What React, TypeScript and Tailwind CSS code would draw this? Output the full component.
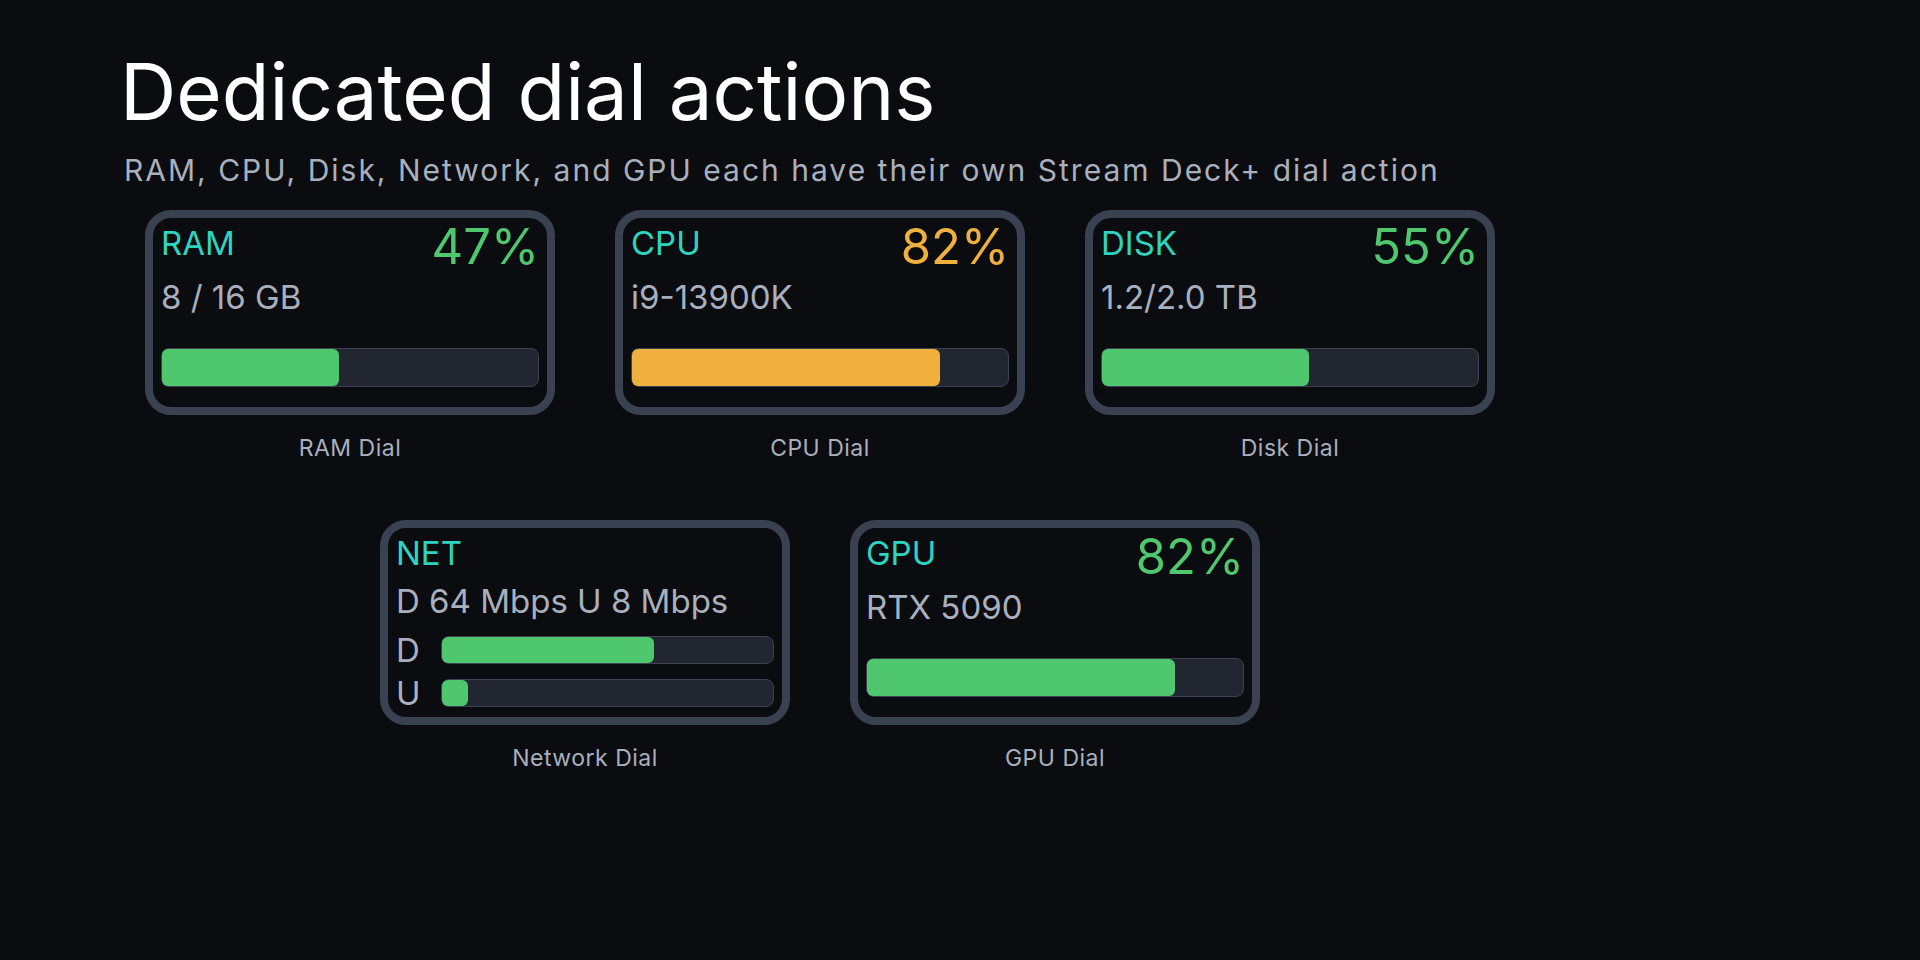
import React from 'react';

type Tone = 'green' | 'amber';

type StatDial = {
  kind: 'stat';
  tag: string;
  detail: string;
  pct: number;
  tone: Tone;
  caption: string;
};

type NetDial = {
  kind: 'net';
  tag: string;
  detail: string;
  down: number;
  up: number;
  caption: string;
};

type Dial = StatDial | NetDial;

const toneText: Record<Tone, string> = {
  green: 'text-[#4fc76f]',
  amber: 'text-[#f0b03e]',
};

const toneFill: Record<Tone, string> = {
  green: 'bg-[#4fc76f]',
  amber: 'bg-[#f0b03e]',
};

const topRow: Dial[] = [
  { kind: 'stat', tag: 'RAM', detail: '8 / 16 GB', pct: 47, tone: 'green', caption: 'RAM Dial' },
  { kind: 'stat', tag: 'CPU', detail: 'i9-13900K', pct: 82, tone: 'amber', caption: 'CPU Dial' },
  { kind: 'stat', tag: 'DISK', detail: '1.2/2.0 TB', pct: 55, tone: 'green', caption: 'Disk Dial' },
];

const bottomRow: Dial[] = [
  { kind: 'net', tag: 'NET', detail: 'D 64 Mbps U 8 Mbps', down: 64, up: 8, caption: 'Network Dial' },
  { kind: 'stat', tag: 'GPU', detail: 'RTX 5090', pct: 82, tone: 'green', caption: 'GPU Dial' },
];

const Bar: React.FC<{ pct: number; fill: string; height: string }> = ({ pct, fill, height }) => (
  <div className={`${height} w-full rounded-[8px] border-[1.5px] border-[#3b4251] bg-[#222631]`}>
    <div className={`h-full rounded-[6px] ${fill}`} style={{ width: `${pct}%` }} />
  </div>
);

const StatFace: React.FC<{ dial: StatDial }> = ({ dial }) => (
  <>
    <div className="flex items-start justify-between pt-[3.5px]">
      <span className="mt-[5px] text-[33px] leading-none text-[#2dd4bf]">{dial.tag}</span>
      <span className={`text-[49px] leading-none ${toneText[dial.tone]}`}>{dial.pct}%</span>
    </div>
    <div className="mt-[10.5px] text-[33px] leading-none text-[#a9b0bd]">{dial.detail}</div>
    <div className="mt-auto mb-[20px]">
      <Bar pct={dial.pct} fill={toneFill[dial.tone]} height="h-[39px]" />
    </div>
  </>
);

const NetFace: React.FC<{ dial: NetDial }> = ({ dial }) => (
  <>
    <div className="pt-[8.5px] text-[33px] leading-none text-[#2dd4bf]">{dial.tag}</div>
    <div className="mt-[15px] text-[33px] leading-none whitespace-nowrap text-[#a9b0bd]">{dial.detail}</div>
    <div className="mt-[16px] flex flex-col gap-[10px]">
      {[
        { label: 'D', pct: dial.down },
        { label: 'U', pct: dial.up },
      ].map(row => (
        <div key={row.label} className="flex items-center">
          <span className="w-[45px] shrink-0 text-[33px] leading-none text-[#a9b0bd]">{row.label}</span>
          <Bar pct={row.pct} fill="bg-[#4fc76f]" height="h-[28px]" />
        </div>
      ))}
    </div>
  </>
);

const DialCard: React.FC<{ dial: Dial }> = ({ dial }) => (
  <div className="flex w-[410px] flex-col items-center">
    <div className="flex h-[205px] w-[410px] flex-col rounded-[26px] border-8 border-[#3a4150] bg-[#0b0c10] px-2">
      {dial.kind === 'stat' ? <StatFace dial={dial} /> : <NetFace dial={dial} />}
    </div>
    <div className="mt-[22px] text-[23px] leading-none tracking-[0.5px] text-[#a9b0bd]">{dial.caption}</div>
  </div>
);

export default function App() {
  return (
    <div className="min-h-screen w-full bg-[#0b0c10] font-['Inter',sans-serif]">
      <div className="ml-[120px] w-[1400px] pt-[53px]">
        <h1 className="text-[78px] leading-none text-white">Dedicated dial actions</h1>
        <p className="mt-[24px] pl-[4px] text-[30px] leading-none tracking-[2px] whitespace-nowrap text-[#a9b0bd]">
          RAM, CPU, Disk, Network, and GPU each have their own Stream Deck+ dial action
        </p>

        <div className="mt-[25px] flex justify-center gap-[60px]">
          {topRow.map(d => (
            <DialCard key={d.tag} dial={d} />
          ))}
        </div>
        <div className="mt-[60px] flex justify-center gap-[60px]">
          {bottomRow.map(d => (
            <DialCard key={d.tag} dial={d} />
          ))}
        </div>
      </div>
    </div>
  );
}
